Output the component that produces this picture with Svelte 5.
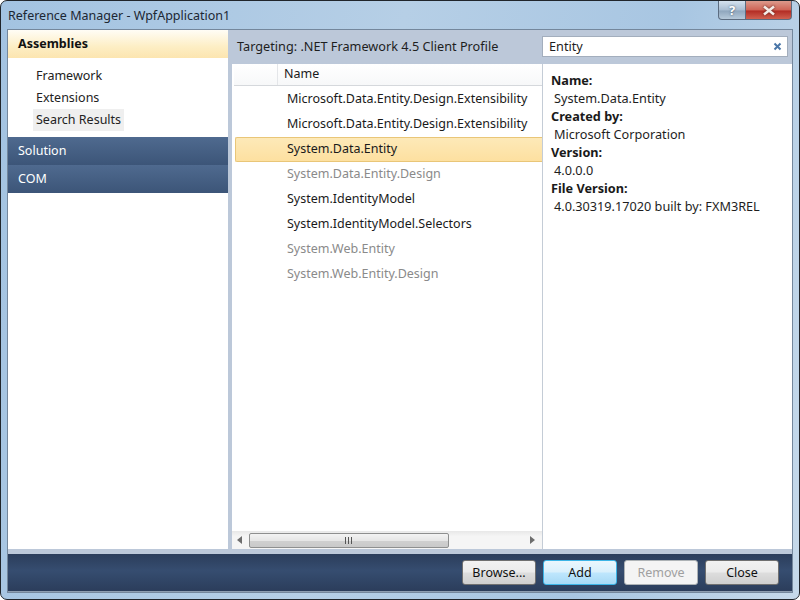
<script>
  const sections = ['Framework', 'Extensions', 'Search Results'];
  const assemblies = [
    { name: 'Microsoft.Data.Entity.Design.Extensibility' },
    { name: 'Microsoft.Data.Entity.Design.Extensibility' },
    { name: 'System.Data.Entity', selected: true },
    { name: 'System.Data.Entity.Design', dim: true },
    { name: 'System.IdentityModel' },
    { name: 'System.IdentityModel.Selectors' },
    { name: 'System.Web.Entity', dim: true },
    { name: 'System.Web.Entity.Design', dim: true }
  ];
  const details = [
    ['Name:', 'System.Data.Entity'],
    ['Created by:', 'Microsoft Corporation'],
    ['Version:', '4.0.0.0'],
    ['File Version:', '4.0.30319.17020 built by: FXM3REL']
  ];
</script>

<div class="window">
  <div class="titlebar">
    <span class="title">Reference Manager - WpfApplication1</span>
    <div class="caption-btns">
      <div class="cap help">?</div>
      <div class="cap close">
        <svg width="14" height="11" viewBox="0 0 14 11"><path d="M2 1.5l10 8M12 1.5l-10 8" stroke="#f4ece8" stroke-width="2.6" fill="none"/></svg>
      </div>
    </div>
  </div>

  <div class="client">
    <div class="main">
      <aside class="sidebar">
        <div class="nav-head active">Assemblies</div>
        <ul class="nav-items">
          {#each sections as s, i}
            <li class:current={i === 2}>{s}</li>
          {/each}
        </ul>
        <div class="nav-head">Solution</div>
        <div class="nav-head">COM</div>
      </aside>

      <section class="content">
        <div class="topbar">
          <span>Targeting: .NET Framework 4.5 Client Profile</span>
          <div class="search">
            <span>Entity</span>
            <svg width="9" height="9" viewBox="0 0 9 9"><path d="M1.5 1.5l6 6M7.5 1.5l-6 6" stroke="#4a76a8" stroke-width="2" fill="none"/></svg>
          </div>
        </div>

        <div class="panes">
          <div class="list">
            <div class="list-head">
              <div class="col-blank"></div>
              <div class="col-name">Name</div>
            </div>
            <div class="rows">
              {#each assemblies as a}
                <div class="row" class:selected={a.selected} class:dim={a.dim}>{a.name}</div>
              {/each}
            </div>
            <div class="hscroll">
              <svg width="6" height="8" viewBox="0 0 6 8"><path d="M5 0v8L0 4z" fill="#6d6d6d"/></svg>
              <div class="thumb">
                <svg width="8" height="7" viewBox="0 0 8 7"><path d="M0 0h1v7H0zM3 0h1v7H3zM6 0h1v7H6z" fill="#555"/></svg>
              </div>
              <svg class="right-arrow" width="6" height="8" viewBox="0 0 6 8"><path d="M1 0v8l5-4z" fill="#6d6d6d"/></svg>
            </div>
          </div>

          <div class="details">
            {#each details as [label, value]}
              <div class="label">{label}</div>
              <div class="value">{value}</div>
            {/each}
          </div>
        </div>
      </section>
    </div>

    <footer class="footer">
      <button>Browse...</button>
      <button class="default">Add</button>
      <button disabled>Remove</button>
      <button>Close</button>
    </footer>
  </div>
</div>

<style>
  :global(body) {
    margin: 0;
    background: #fff;
  }

  .window {
    width: 800px;
    height: 600px;
    box-sizing: border-box;
    border: 1px solid #20252b;
    border-radius: 7px;
    background: linear-gradient(100deg, #a3c3e1 0%, #b6cfe6 45%, #a8c6e2 75%, #c6d9ea 100%);
    padding: 0 7px 7px;
    display: flex;
    flex-direction: column;
    font-family: "Noto Sans", "Liberation Sans", sans-serif;
    font-size: 12.5px;
    color: #1a1a1a;
  }

  .titlebar {
    height: 29px;
    display: flex;
    justify-content: space-between;
    flex-shrink: 0;
  }

  .title {
    margin-top: 6px;
    line-height: 17px;
    color: #1c2733;
  }

  .caption-btns {
    display: flex;
    height: 20px;
  }

  .cap {
    display: flex;
    align-items: center;
    justify-content: center;
    height: 19px;
    box-sizing: border-box;
    border: 1px solid #5c6c80;
    border-top: none;
  }

  .help {
    width: 28px;
    border-radius: 0 0 0 4px;
    background: linear-gradient(#d5e2ef, #a9bdd2 50%, #8fa6bd 55%, #b6c9da);
    color: #fff;
    font-weight: 700;
    font-size: 13px;
    text-shadow: 0 0 2px #33475c;
  }

  .close {
    width: 46px;
    border-left: none;
    border-radius: 0 0 4px 0;
    background: linear-gradient(#dd9a8c, #cf6456 50%, #b32c24 55%, #d0604f);
  }

  .close svg {
    filter: drop-shadow(0 0 1px #5c2018);
  }

  .client {
    flex: 1;
    min-height: 0;
    display: flex;
    flex-direction: column;
    background: #bcc8d9;
    box-shadow: 0 0 0 1px #74879c;
  }

  .main {
    flex: 1;
    min-height: 0;
    display: flex;
    gap: 4px;
    padding-bottom: 5px;
  }

  .sidebar {
    width: 220px;
    background: #fff;
    flex-shrink: 0;
  }

  .nav-head {
    height: 28px;
    line-height: 27px;
    padding-left: 10px;
    color: #fff;
    background: linear-gradient(#4f6a8f, #3c5578);
  }

  .nav-head.active {
    color: #111;
    font-weight: 700;
    background: linear-gradient(#fffdf6, #fdeec4 60%, #fce5b0);
  }

  .nav-items {
    list-style: none;
    margin: 0;
    padding: 7px 0 6px 25px;
  }

  .nav-items li {
    height: 22px;
    line-height: 22px;
    padding: 0 3px;
    width: fit-content;
    color: #222;
  }

  .nav-items li.current {
    background: #efefef;
  }

  .content {
    flex: 1;
    min-width: 0;
    display: flex;
    flex-direction: column;
  }

  .topbar {
    height: 34px;
    flex-shrink: 0;
    display: flex;
    align-items: center;
    justify-content: space-between;
    padding: 0 0 2px 5px;
    box-sizing: border-box;
    color: #1e1e1e;
    font-size: 12.7px;
  }

  .search {
    width: 246px;
    height: 21px;
    box-sizing: border-box;
    margin-right: 4px;
    border: 1px solid #a3aebd;
    background: #fff;
    display: flex;
    align-items: center;
    justify-content: space-between;
    padding: 0 5px 0 6px;
  }

  .panes {
    flex: 1;
    min-height: 0;
    display: flex;
    background: #fff;
  }

  .list {
    width: 310px;
    flex-shrink: 0;
    display: flex;
    flex-direction: column;
    border-right: 1px solid #c4ccd6;
  }

  .list-head {
    height: 21px;
    flex-shrink: 0;
    display: flex;
    background: linear-gradient(#fff, #f7f8f9);
    border-bottom: 1px solid #d5d8dc;
    line-height: 19px;
    margin-left: 2px;
  }

  .col-blank {
    width: 43px;
    border-right: 1px solid #e4e6e9;
  }

  .col-name {
    padding-left: 6px;
  }

  .rows {
    flex: 1;
    min-height: 0;
    padding-top: 1px;
  }

  .row {
    height: 25px;
    line-height: 23px;
    box-sizing: border-box;
    padding-left: 52px;
    margin-left: 3px;
    color: #1a1a1a;
  }

  .row.selected {
    background: linear-gradient(#fde9b8, #fde0a0);
    border: 1px solid #e9c678;
    border-right: none;
    border-radius: 2px 0 0 2px;
    padding-left: 51px;
    line-height: 21px;
  }

  .row.dim {
    color: #8a8a8a;
  }

  .hscroll {
    height: 18px;
    flex-shrink: 0;
    display: flex;
    align-items: center;
    padding: 0 7px 0 5px;
    background: linear-gradient(#e8e8e8, #f5f5f5 30%, #f5f5f5);
  }

  .thumb {
    width: 200px;
    height: 15px;
    margin-left: 6px;
    box-sizing: border-box;
    display: flex;
    align-items: center;
    justify-content: center;
    border: 1px solid #8e8f8f;
    border-radius: 2px;
    background: linear-gradient(#f3f3f3, #e6e6e6 50%, #d0d0d0 52%, #c9c9c9);
  }

  .right-arrow {
    margin-left: auto;
  }

  .details {
    flex: 1;
    min-width: 0;
    padding: 7px 0 0 8px;
    line-height: 18px;
    font-size: 12.7px;
  }

  .label {
    font-weight: 700;
    color: #1a1a1a;
  }

  .value {
    padding-left: 3px;
    color: #1e1e1e;
  }

  .footer {
    height: 38px;
    flex-shrink: 0;
    box-sizing: border-box;
    display: flex;
    align-items: center;
    justify-content: flex-end;
    gap: 7px;
    padding: 0 13px 0 0;
    background: linear-gradient(#2b3d5b, #364d70 45%, #2b3d5b);
    border-bottom: 1px solid #8d9db0;
  }

  button {
    width: 74px;
    height: 25px;
    padding: 0;
    border: 1px solid #707070;
    border-radius: 3px;
    background: linear-gradient(#f2f2f2, #ebebeb 48%, #dddddd 52%, #cfcfcf);
    font: inherit;
    color: #111;
  }

  button.default {
    border: 1px solid #3cb4e6;
    background: linear-gradient(#eaf6fd, #d9f0fc 48%, #bee6fd 52%, #a7d9f5);
  }

  button:disabled {
    border-color: #adb2b5;
    background: #f4f4f4;
    color: #a0a0a0;
  }
</style>
